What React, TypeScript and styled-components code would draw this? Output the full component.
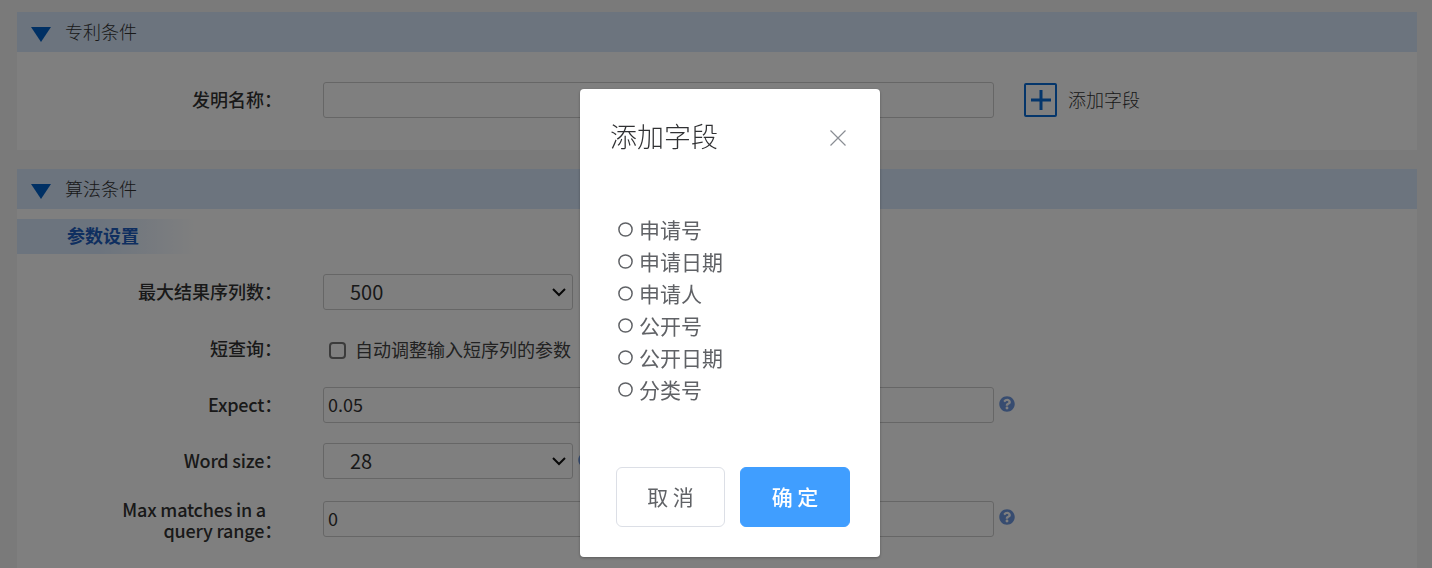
import styled, { createGlobalStyle } from "styled-components";
import { FaQuestionCircle } from "react-icons/fa";

const FONT = `"Noto Sans CJK SC", "Noto Sans", sans-serif`;

const GlobalStyle = createGlobalStyle`
  html, body {
    margin: 0;
    padding: 0;
    height: 568px;
    overflow: hidden;
    background: #f5f5f5;
    font-family: ${FONT};
  }
  * { box-sizing: border-box; }
`;

const FIELDS = ["申请号", "申请日期", "申请人", "公开号", "公开日期", "分类号"];

const Dropdown = ({ value }: { value: string }) => (
  <SelectWrap>
    <Select defaultValue={value}>
      <option>{value}</option>
    </Select>
    <Chevron width="14" height="9" viewBox="0 0 14 9">
      <path d="M1 1l6 6 6-6" stroke="#111" strokeWidth="2" fill="none" />
    </Chevron>
  </SelectWrap>
);

const App = () => {
  return (
    <Page>
      <GlobalStyle />
      <Section>
        <SectionHeader>
          <Triangle />
          <SectionTitle>专利条件</SectionTitle>
        </SectionHeader>
        <PatentBody>
          <Row>
            <Label>发明名称：</Label>
            <TextInput type="text" />
            <PlusBox>
              <svg width="20" height="20" viewBox="0 0 20 20">
                <path d="M10 0v20M0 10h20" stroke="#0a6cd6" strokeWidth="3" fill="none" />
              </svg>
            </PlusBox>
            <AddText>添加字段</AddText>
          </Row>
        </PatentBody>
      </Section>

      <Section $gap>
        <SectionHeader>
          <Triangle />
          <SectionTitle>算法条件</SectionTitle>
        </SectionHeader>
        <AlgoBody>
          <SubHeader>参数设置</SubHeader>
          <Rows>
            <Row>
              <Label>最大结果序列数：</Label>
              <Dropdown value="500" />
            </Row>
            <Row $tall>
              <Label>短查询：</Label>
              <CheckLabel>
                <CheckBox type="checkbox" />
                自动调整输入短序列的参数
              </CheckLabel>
            </Row>
            <Row>
              <Label $latin>Expect：</Label>
              <TextInput type="text" defaultValue="0.05" />
              <Help />
            </Row>
            <Row>
              <Label $latin>Word size：</Label>
              <Dropdown value="28" />
              <Help />
            </Row>
            <Row $pull>
              <Label $latin $tight>
                <FirstLine>Max matches in a</FirstLine>
                <br />
                query range：
              </Label>
              <TextInput type="text" defaultValue="0" />
              <Help $lift />
            </Row>
          </Rows>
        </AlgoBody>
      </Section>

      <Overlay>
        <Modal>
          <ModalHead>
            <ModalTitle>添加字段</ModalTitle>
            <CloseButton aria-label="关闭">
              <svg width="16" height="16" viewBox="0 0 16 16">
                <path d="M0.5 0.5l15 15M15.5 0.5l-15 15" stroke="#8a8d94" strokeWidth="1.2" fill="none" />
              </svg>
            </CloseButton>
          </ModalHead>
          <RadioList>
            {FIELDS.map((f) => (
              <RadioRow key={f}>
                <RadioDot width="15" height="15" viewBox="0 0 15 15">
                  <circle cx="7.5" cy="7.5" r="6.6" stroke="#606266" strokeWidth="1.5" fill="none" />
                </RadioDot>
                {f}
              </RadioRow>
            ))}
          </RadioList>
          <ModalFoot>
            <CancelButton>取 消</CancelButton>
            <OkButton>确 定</OkButton>
          </ModalFoot>
        </Modal>
      </Overlay>
    </Page>
  );
};

export default App;

const Page = styled.div`
  padding: 12px 15px 0 17px;
  height: 568px;
  overflow: hidden;
  color: #333;
`;

const Section = styled.section<{ $gap?: boolean }>`
  margin-top: ${(p) => (p.$gap ? "19px" : "0")};
  background: #fff;
`;

const SectionHeader = styled.div`
  display: flex;
  align-items: center;
  height: 40px;
  padding-left: 14px;
  background: #d8e8fc;
`;

const Triangle = styled.span`
  width: 0;
  height: 0;
  border-left: 10.5px solid transparent;
  border-right: 10.5px solid transparent;
  border-top: 15px solid #0060c8;
  margin-top: 4px;
`;

const SectionTitle = styled.span`
  margin-left: 14px;
  padding-bottom: 2px;
  font-size: 18px;
  font-weight: 300;
  color: #333;
`;

const PatentBody = styled.div`
  padding: 30px 0 32px;
`;

const AlgoBody = styled.div`
  padding-top: 10px;
  height: 400px;
`;

const SubHeader = styled.div`
  height: 35px;
  width: 200px;
  padding-left: 50px;
  font-size: 18px;
  font-weight: 700;
  line-height: 33px;
  color: #1f5fc0;
  background: linear-gradient(to right, #d8e8fc 40%, #ffffff 90%);
`;

const Rows = styled.div`
  display: flex;
  flex-direction: column;
  gap: 20px;
  padding-top: 20px;
`;

const Row = styled.div<{ $tall?: boolean; $pull?: boolean }>`
  display: flex;
  align-items: center;
  min-height: ${(p) => (p.$tall ? "37px" : "36px")};
  margin-top: ${(p) => (p.$pull ? "-1px" : "0")};
`;

const Label = styled.label<{ $tight?: boolean; $latin?: boolean }>`
  flex: none;
  width: 265px;
  margin-right: 41px;
  margin-bottom: ${(p) => (p.$tight ? "-1px" : "2px")};
  padding-top: ${(p) => (p.$tight ? "1px" : "0")};
  text-align: right;
  font-size: 18px;
  font-weight: 500;
  letter-spacing: ${(p) => (p.$latin ? "-0.2px" : "0")};
  color: #333;
  line-height: ${(p) => (p.$tight ? "21px" : "24px")};
  white-space: nowrap;
`;

const FirstLine = styled.span`
  display: inline-block;
  margin-right: 16px;
`;

const TextInput = styled.input`
  width: 671px;
  height: 36px;
  padding: 0 0 2px 4px;
  border: 1px solid #ccc;
  border-radius: 3px;
  background: #fff;
  font-family: ${FONT};
  font-size: 18px;
  color: #333;
  outline: none;
`;

const SelectWrap = styled.div`
  position: relative;
  flex: none;
  width: 250px;
  height: 36px;
`;

const Select = styled.select`
  appearance: none;
  width: 100%;
  height: 100%;
  padding: 0 0 2px 26px;
  border: 1px solid #ccc;
  border-radius: 3px;
  background: #fff;
  font-family: ${FONT};
  font-size: 20px;
  color: #333;
  outline: none;
`;

const Chevron = styled.svg`
  position: absolute;
  right: 7px;
  top: 14px;
  pointer-events: none;
`;

const CheckLabel = styled.label`
  display: flex;
  align-items: center;
  padding-left: 6px;
  font-size: 18px;
  color: #444;
  white-space: nowrap;
`;

const CheckBox = styled.input`
  appearance: none;
  width: 17px;
  height: 17px;
  margin: 3px 9px 0 0;
  border: 2px solid #777;
  border-radius: 4px;
  background: #fff;
`;

const Help = styled(FaQuestionCircle)<{ $lift?: boolean }>`
  flex: none;
  width: 16px;
  height: 16px;
  margin: ${(p) => (p.$lift ? "-4px" : "-2px")} 0 0 5px;
  color: #6f99e0;
`;

const PlusBox = styled.span`
  display: flex;
  align-items: center;
  justify-content: center;
  width: 33px;
  height: 34px;
  margin-left: 30px;
  border: 2px solid #0a6cd6;
  border-radius: 2px;
`;

const AddText = styled.span`
  margin-left: 11px;
  padding-bottom: 2px;
  font-size: 18px;
  font-weight: 300;
  color: #333;
`;

const Overlay = styled.div`
  position: fixed;
  inset: 0;
  background: rgba(0, 0, 0, 0.5);
`;

const Modal = styled.div`
  position: absolute;
  left: 580px;
  top: 89px;
  display: flex;
  flex-direction: column;
  width: 300px;
  height: 468px;
  padding: 0 30px 30px 30px;
  border-radius: 4px;
  background: #fff;
  box-shadow: 0 1px 3px rgba(0, 0, 0, 0.3);
`;

const ModalHead = styled.div`
  display: flex;
  align-items: center;
  justify-content: space-between;
  height: 38px;
  margin-top: 29px;
`;

const ModalTitle = styled.h2`
  margin: 0;
  padding-bottom: 2px;
  font-size: 27px;
  font-weight: 300;
  line-height: 36px;
  color: #303133;
`;

const CloseButton = styled.button`
  display: flex;
  padding: 0;
  margin: 2px 4px 0 0;
  border: none;
  background: none;
`;

const RadioList = styled.div`
  display: flex;
  flex-direction: column;
  margin-top: 58px;
`;

const RadioRow = styled.label`
  display: flex;
  align-items: center;
  height: 32px;
  padding: 0 0 2px 8px;
  font-size: 21px;
  color: #606266;
`;

const RadioDot = styled.svg`
  flex: none;
  margin-right: 6px;
`;

const ModalFoot = styled.div`
  display: flex;
  justify-content: space-between;
  margin-top: auto;
  padding-left: 6px;
`;

const CancelButton = styled.button`
  width: 109px;
  height: 60px;
  padding: 0 0 2px;
  border: 1px solid #dcdfe6;
  border-radius: 6px;
  background: #fff;
  font-family: ${FONT};
  font-size: 21px;
  color: #606266;
`;

const OkButton = styled.button`
  width: 110px;
  height: 60px;
  padding: 0 0 2px;
  border: 1px solid #409eff;
  border-radius: 6px;
  background: #409eff;
  font-family: ${FONT};
  font-size: 21px;
  font-weight: 500;
  color: #fff;
`;
